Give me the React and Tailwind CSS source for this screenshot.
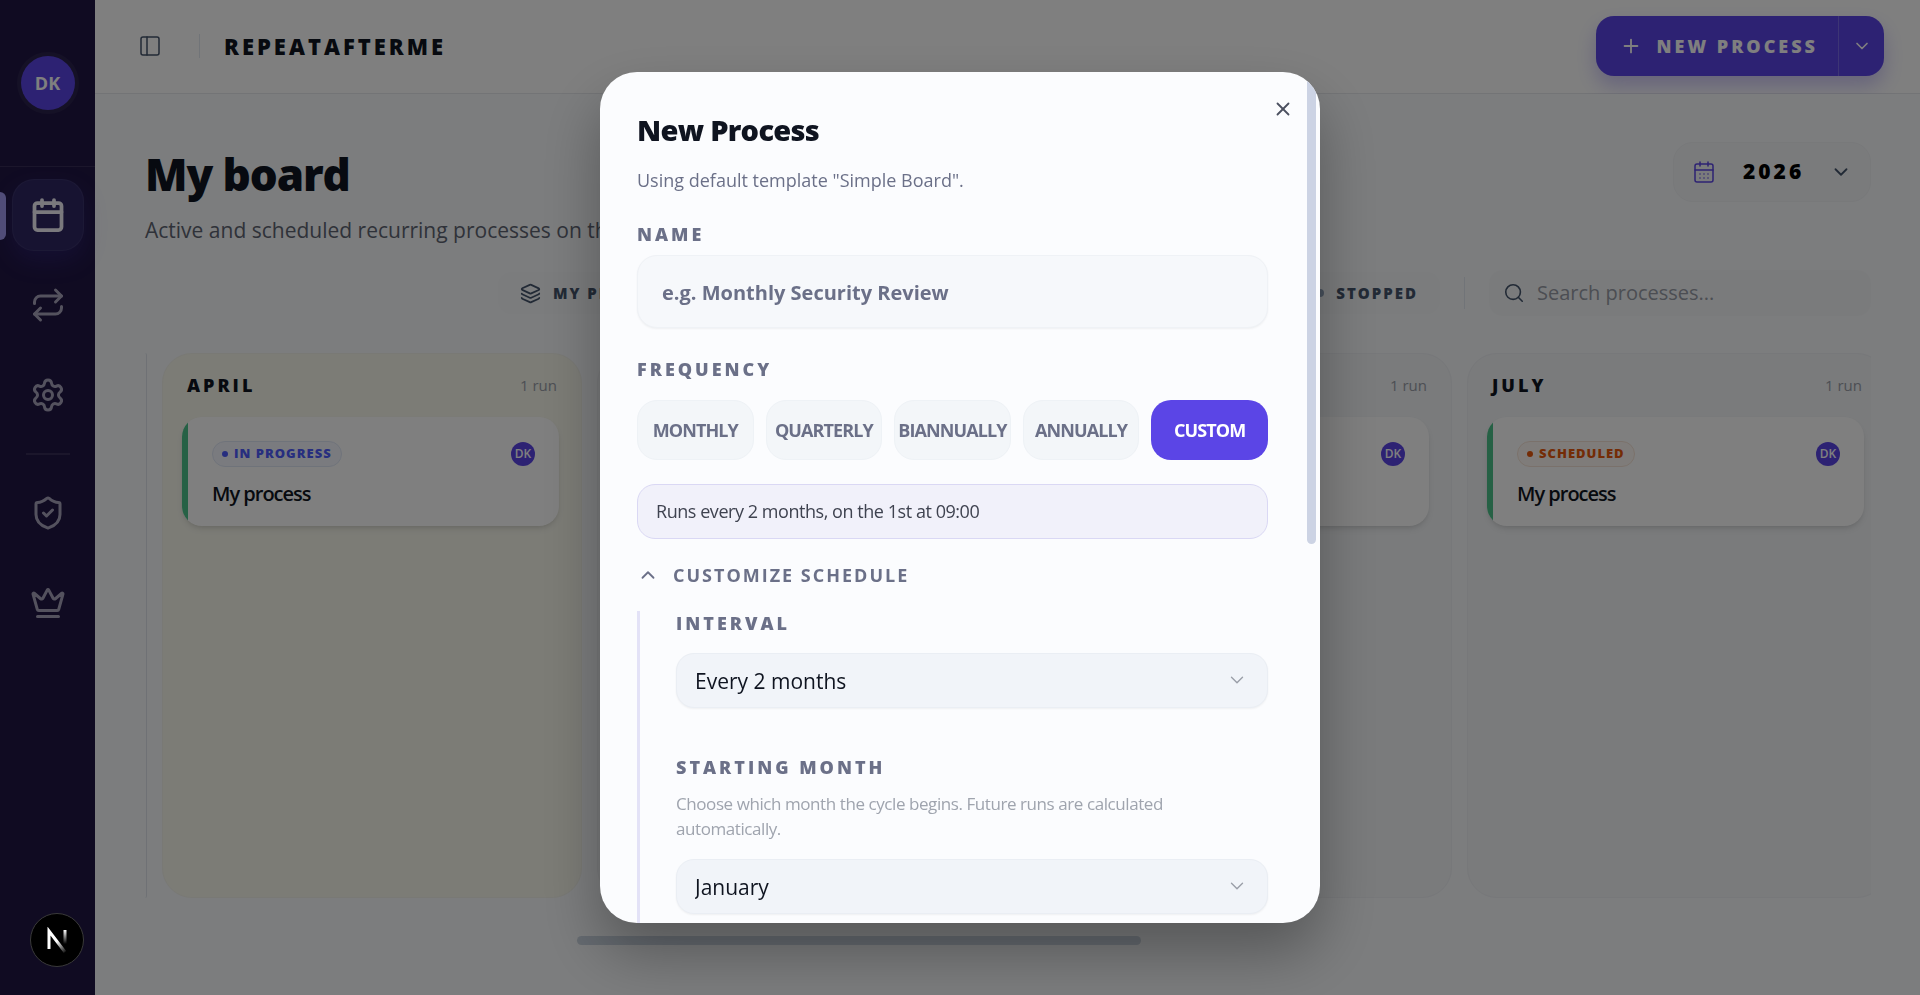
import React from 'react';
import { Calendar, CalendarDays, ChevronDown, ChevronUp, Crown, Layers, PanelLeft, Plus, Repeat, Search, Settings, ShieldCheck, X } from 'lucide-react';

const frequencies = ['Monthly', 'Quarterly', 'Biannually', 'Annually', 'Custom'];

const months = [
    { name: 'April', status: 'In progress', current: true },
    { name: 'May' },
    { name: 'June', status: 'Scheduled' },
    { name: 'July', status: 'Scheduled' },
];

const NavItem = ({ icon: Icon, label, active }) => (
    <a
        href="#"
        aria-label={label}
        className={active
            ? 'relative flex size-[72px] items-center justify-center rounded-[22px] border border-white/5 bg-[#2f2763] text-[#f4f2fb] shadow-[0_10px_24px_rgba(79,70,229,0.2)]'
            : 'relative flex size-[72px] items-center justify-center rounded-[22px] text-[#a9a5bd]'}
    >
        {active && <span className="absolute top-3 -left-[13px] h-12 w-[6px] rounded-r-lg bg-[#a099f0]" />}
        <Icon size={36} strokeWidth={active ? 2.5 : 2} />
    </a>
);

const Sidebar = () => (
    <aside className="flex w-[95px] shrink-0 flex-col bg-[#201644]">
        <div className="flex h-[167px] items-center justify-center border-b border-white/10">
            <div className="flex size-[54px] items-center justify-center rounded-full bg-[#5b45e6] text-[18px] font-bold text-white ring-4 ring-white/5">DK</div>
        </div>
        <nav className="flex flex-col items-center gap-[18px] pt-3 pl-px">
            <NavItem icon={Calendar} label="Board" active />
            <NavItem icon={Repeat} label="Processes" />
            <NavItem icon={Settings} label="Settings" />
            <div className="my-1 h-[2px] w-11 bg-white/10" />
            <NavItem icon={ShieldCheck} label="Security" />
            <NavItem icon={Crown} label="Plan" />
        </nav>
    </aside>
);

const Header = () => (
    <header className="flex h-[94px] shrink-0 items-center border-b border-[#e6e8ec] bg-white pr-9 pb-px pl-[43px]">
        <button aria-label="Toggle sidebar" className="text-slate-600"><PanelLeft size={24} strokeWidth={1.5} /></button>
        <div className="mr-6 ml-[37px] h-6 w-px bg-slate-200" />
        <span className="text-[22px] font-extrabold tracking-[3px] text-[#0f1420] uppercase">RepeatAfterMe</span>
        <div className="ml-auto flex h-[60px] rounded-[18px] bg-[#5b45e6] text-white shadow-[0_10px_20px_rgba(91,69,230,0.3)]">
            <button className="flex items-center gap-[14px] pr-5 pl-6 text-[18px] font-extrabold tracking-[3px] uppercase">
                <Plus size={22} strokeWidth={2} />
                New Process
            </button>
            <button aria-label="More options" className="flex w-[46px] items-center justify-center border-l border-white/20">
                <ChevronDown size={20} />
            </button>
        </div>
    </header>
);

const ProcessCard = ({ status, current }) => (
    <article className="flex h-[109px] overflow-hidden rounded-[20px] bg-white shadow-md">
        <div className="w-[6px] shrink-0 bg-[#4cc38a]" />
        <div className="flex-1 px-6 pt-6">
            <div className="flex items-center justify-between">
                <span className={current
                    ? 'flex h-[26px] items-center gap-[6px] rounded-full border border-[#dfe6f5] bg-[#f4f7fe] px-[9px] text-[13px] font-extrabold tracking-[1px] text-[#4f5dff] uppercase'
                    : 'flex h-[26px] items-center gap-[6px] rounded-full border border-[#f5e3d6] bg-[#fff9f4] px-[9px] text-[13px] font-extrabold tracking-[1px] text-[#e8590c] uppercase'}
                >
                    <span className="size-[6px] rounded-full bg-current" />
                    {status}
                </span>
                <span className="flex size-6 items-center justify-center rounded-full bg-[#5b45e6] text-[12px] font-semibold text-white">DK</span>
            </div>
            <h3 className="mt-[13px] text-[20px] leading-7 font-semibold tracking-tighter text-[#0f1420]">My process</h3>
        </div>
    </article>
);

const MonthColumn = ({ name, status, current }) => (
    <section className={current
        ? 'h-[545px] w-[420px] shrink-0 rounded-[30px] border border-[#f3f3ea] bg-[#f8f8ed] pr-[22px] pl-[19px]'
        : 'h-[545px] w-[420px] shrink-0 rounded-[30px] border border-[#eef0f4] bg-[#f4f6f8] pr-[22px] pl-[19px]'}
    >
        <div className="flex h-[63px] items-center justify-between pr-[2px] pl-[5px]">
            <h2 className="text-[18px] font-extrabold tracking-[3px] text-[#0f1420] uppercase">{name}</h2>
            {status && <span className="text-[15px] text-[#9a9ea8]">1 run</span>}
        </div>
        {status && <ProcessCard status={status} current={current} />}
    </section>
);

const Board = () => (
    <main className="flex-1 bg-[#f8fafc] pr-[49px] pl-[50px] pt-12">
        <div className="flex items-start justify-between">
            <div>
                <h1 className="text-[44px] leading-[64px] font-extrabold tracking-tight text-[#0f1420]">My board</h1>
                <p className="mt-2 text-[21px] leading-8 text-[#5f6573]">Active and scheduled recurring processes on this board.</p>
            </div>
            <label className="relative flex h-[60px] w-[198px] items-center rounded-[20px] border border-[#f0f2f5] bg-[#f5f7f9] pl-[18px]">
                <CalendarDays size={24} strokeWidth={1.5} className="text-[#5b45e6]" />
                <select aria-label="Year" className="ml-[27px] w-[120px] appearance-none text-[21px] font-extrabold tracking-[3px] text-black">
                    <option>2026</option>
                </select>
                <ChevronDown size={22} strokeWidth={2} className="pointer-events-none absolute right-[18px] text-slate-600" />
            </label>
        </div>
        <div className="mt-6 flex items-center justify-end">
            <div className="flex h-[42px] w-[942px] items-center justify-between rounded-[14px] bg-[#f6f8fa] px-[22px] text-[15px] font-extrabold tracking-[2px] text-slate-600 uppercase">
                <button className="flex items-center gap-3 uppercase"><Layers size={21} strokeWidth={2} />My processes</button>
                <button className="flex items-center gap-3 uppercase"><span className="size-2 rounded-full bg-slate-400" />Stopped</button>
            </div>
            <div className="mx-6 h-8 w-px bg-slate-200" />
            <label className="flex h-[46px] w-[382px] items-center gap-3 rounded-[14px] bg-[#f5f7f9] px-[14px]">
                <Search size={22} strokeWidth={1.75} className="text-slate-600" />
                <input aria-label="Search processes" placeholder="Search processes..." className="min-w-0 flex-1 text-[20px] outline-none placeholder:text-[#989ca6]" />
            </label>
        </div>
        <div className="mt-[37px] flex gap-[15px] overflow-hidden">
            <div className="h-[545px] w-[2px] shrink-0 rounded-r-[30px] border-r border-[#dfe3ea]" />
            {months.map((month) => <MonthColumn key={month.name} {...month} />)}
        </div>
        <div className="mt-[38px] h-[9px]">
            <div className="ml-[25%] h-full w-[564px] rounded-full bg-[#cbd5e1]" />
        </div>
    </main>
);

const Label = ({ htmlFor, children }) => (
    <label htmlFor={htmlFor} className="block text-[18px] leading-6 font-extrabold tracking-[3px] text-[#6b7088] uppercase">{children}</label>
);

const SelectField = ({ id, value }) => (
    <div className="relative mt-[18px]">
        <select id={id} className="h-[55px] w-full appearance-none rounded-[18px] border border-[#eaeef4] bg-[#f1f4f9] px-[18px] pt-[3px] text-[21px] font-medium text-[#0f1420] shadow-xs">
            <option>{value}</option>
        </select>
        <ChevronDown size={22} strokeWidth={1.5} className="pointer-events-none absolute top-4 right-5 text-[#9a9ea8]" />
    </div>
);

const NewProcessDialog = () => (
    <div className="fixed inset-0 flex items-center justify-center bg-black/50">
        <div role="dialog" aria-labelledby="dialog-title" className="relative max-h-[851px] w-full max-w-[720px] overflow-hidden rounded-[37px] bg-[#fbfcfe] pt-[35px] pr-[52px] pl-[37px] shadow-[0_30px_60px_rgba(0,0,0,0.3)]">
            <button aria-label="Close" className="absolute top-[26px] right-[26px] text-[#4b5060]"><X size={22} strokeWidth={2} /></button>
            <div className="absolute top-0 right-1 h-[472px] w-[9px] rounded-b-full bg-[#ccd3e4]" />

            <h2 id="dialog-title" className="text-[29px] leading-[45px] font-extrabold tracking-tight text-[#0f1420]">New Process</h2>
            <p className="mt-4 text-[18px] leading-6 text-[#6b7088]">Using default template "Simple Board".</p>

            <form className="mt-[30px]">
                <Label htmlFor="name">Name</Label>
                <input id="name" placeholder="e.g. Monthly Security Review" className="mt-[9px] h-[73px] w-full rounded-[20px] border border-[#eff2f6] bg-[#f6f8fb] px-6 pt-[2px] text-[20px] font-bold shadow-xs outline-none placeholder:text-[#6b7088]" />

                <fieldset className="mt-[29px]">
                    <legend className="text-[18px] leading-6 font-extrabold tracking-[3px] text-[#6b7088] uppercase">Frequency</legend>
                    <div className="mt-[19px] grid grid-cols-5 gap-3">
                        {frequencies.map((item) => (
                            <button
                                key={item}
                                type="button"
                                className={item === 'Custom'
                                    ? 'h-[60px] rounded-[20px] bg-[#5b45e6] text-[18px] font-bold tracking-tighter text-white uppercase'
                                    : 'h-[60px] rounded-[20px] border border-[#eef2f6] bg-[#f3f6f9] text-[18px] font-bold tracking-tighter text-[#6b7088] uppercase'}
                            >
                                {item}
                            </button>
                        ))}
                    </div>
                </fieldset>

                <p className="mt-6 flex h-[55px] items-center rounded-[18px] border border-[#dad8f4] bg-[#f1f1fa] px-[18px] text-[18px] font-medium tracking-tight text-[#3f4350]">Runs every 2 months, on the 1st at 09:00</p>

                <button type="button" className="mt-6 flex items-center gap-[14px] text-[18px] leading-6 font-bold tracking-[2px] text-[#6b7088] uppercase">
                    <ChevronUp size={22} strokeWidth={2} />
                    Customize schedule
                </button>

                <div className="mt-6 border-l-[3px] border-[#e3e2f7] pb-12 pl-9">
                    <Label htmlFor="interval">Interval</Label>
                    <SelectField id="interval" value="Every 2 months" />
                    <div className="mt-[47px]">
                        <Label htmlFor="month">Starting month</Label>
                        <p className="mt-3 text-[17px] leading-[25px] tracking-tight text-[#9fa4ae]">Choose which month the cycle begins. Future runs are calculated automatically.</p>
                        <SelectField id="month" value="January" />
                    </div>
                </div>
            </form>
        </div>
    </div>
);

const DevBadge = () => (
    <div className="fixed bottom-[28px] left-[30px] flex size-[54px] items-center justify-center rounded-full border border-[#3a3a3a] bg-black">
        <svg width="24" height="26" viewBox="0 0 24 26" fill="none" aria-hidden="true">
            <defs>
                <linearGradient id="stem" x1="0" y1="3" x2="0" y2="17" gradientUnits="userSpaceOnUse">
                    <stop stopColor="#fff" />
                    <stop offset="1" stopColor="#fff" stopOpacity="0" />
                </linearGradient>
                <linearGradient id="slash" x1="12" y1="14" x2="21" y2="24" gradientUnits="userSpaceOnUse">
                    <stop stopColor="#fff" />
                    <stop offset="1" stopColor="#fff" stopOpacity="0.1" />
                </linearGradient>
            </defs>
            <path d="M4 22V4L20 25" stroke="url(#slash)" strokeWidth="3" />
            <path d="M20 3V17" stroke="url(#stem)" strokeWidth="3" />
        </svg>
    </div>
);

function App() {
    return (
        <div className="flex min-h-screen font-['Open_Sans','Noto_Sans',sans-serif]">
            <Sidebar />
            <div className="flex min-w-0 flex-1 flex-col">
                <Header />
                <Board />
            </div>
            <NewProcessDialog />
            <DevBadge />
        </div>
    );
}

export default App;
